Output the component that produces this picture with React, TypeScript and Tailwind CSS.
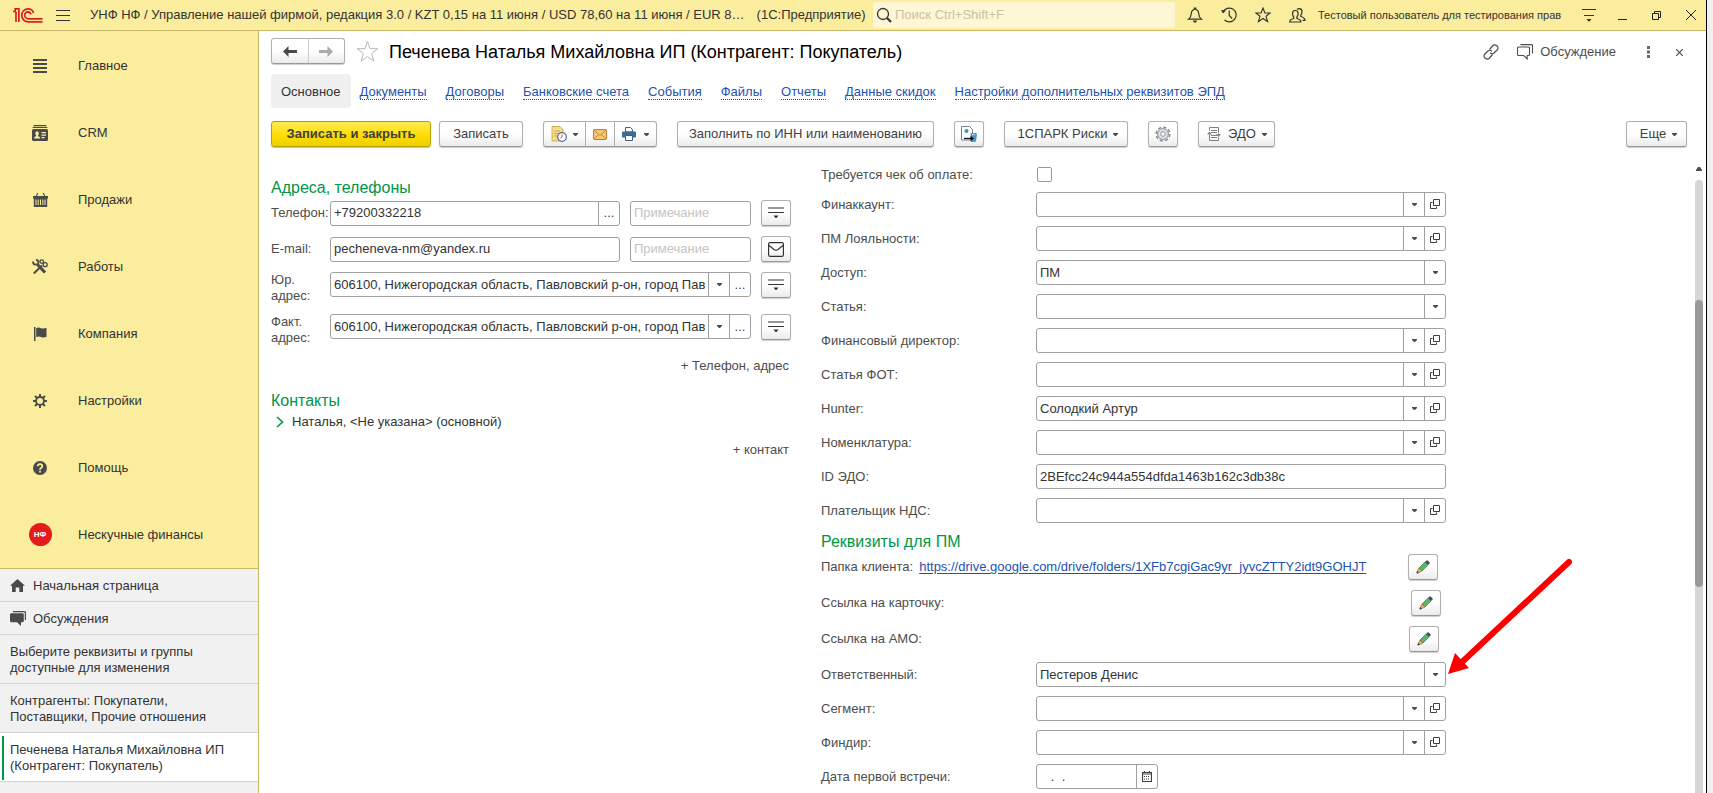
import { useState, type ReactNode } from "react";

const BTN =
  "h-[26px] shrink-0 flex items-center justify-center rounded-[3px] border border-[#b0b0b0] border-b-[#999] bg-linear-to-b from-white from-50% to-[#ebebeb] shadow-[0_1px_1px_rgba(0,0,0,0.2)] text-[#404040]";

const Caret = ({ className = "" }: { className?: string }) => (
  <svg className={className} width="5" height="3" viewBox="0 0 5 3" fill="#4d4d4d">
    <path d="M0 0h5v1L3 3H2L0 1z" />
  </svg>
);

const OpenIcon = () => (
  <svg width="10" height="11" viewBox="0 0 10 11" fill="none" stroke="#404040">
    <path d="M3.500.5h6v6h-6zM2.500 3.500h-2v6h6v-2" />
  </svg>
);

const MenuArrowIcon = () => (
  <svg width="16" height="12" viewBox="0 0 16 12" fill="none" stroke="#333" strokeWidth="1.200">
    <path d="M0 1h16M0 5.500h16" />
    <path d="M5.500 8.500h5L8.500 11h-1z" fill="#333" stroke="none" />
  </svg>
);

const LetterIcon = () => (
  <svg width="16" height="15" viewBox="0 0 16 15" fill="none" stroke="#333" strokeWidth="1.200">
    <rect x=".6" y=".6" width="14.800" height="13.800" rx="1.500" />
    <path d="M1 3.500l5 4q2 1.400 4 0l5-4" />
  </svg>
);

const PencilIcon = () => (
  <svg width="14" height="14" viewBox="0 0 14 14">
    <path d="M3 8L9 2l3 3-6 6z" fill="#58b866" stroke="#3d7d4a" strokeWidth=".7" />
    <path d="M9 2l1.500-1.500q.6-.5 1.200 0l1.800 1.800q.4.600 0 1.200L12 5z" fill="#44505c" />
    <path d="M3 8l3 3-4.700 2.300-.7-.7z" fill="#eab560" stroke="#7a5a30" strokeWidth=".6" />
    <path d="M1.400 11l1.600 1.600-2.500 1z" fill="#3a3a3a" />
  </svg>
);

const LogoIcon = () => (
  <svg width="30" height="15" viewBox="0 0 30 15" fill="none" stroke="#d8201d" strokeWidth="1.700">
    <path d="M0 3.500h3M2.200 3V.8h3.700V14M3 3.500V14" />
    <path d="M20.500 5A5.700 5.700 0 0 0 15 .9a6.200 6.200 0 0 0-6.200 6.300 6.400 6.400 0 0 0 6.400 6.700H29.500" />
    <path d="M17.800 6.500a3 3 0 0 0-2.800-2.700 3.300 3.300 0 0 0-3.300 3.400 3.600 3.600 0 0 0 3.600 3.600H29.500" />
  </svg>
);

const sections: { title: string; icon: ReactNode }[] = [
  {
    title: "Главное",
    icon: (
      <svg width="14" height="14" viewBox="0 0 14 14" fill="#4a4a4a">
        <path d="M0 0h14v2H0zM0 4h14v2H0zM0 8h14v2H0zM0 12h14v2H0z" />
      </svg>
    ),
  },
  {
    title: "CRM",
    icon: (
      <svg width="16" height="16" viewBox="0 0 16 16" fill="#4a4a4a">
        <path d="M2 0h12l1 1.200H1zM1 1.900h14l.6 1.200H.4z" />
        <rect y="3.900" width="16" height="12.100" rx="1.500" />
        <path d="M2 13.500q0-1.700 2-2.200l.2-.8Q3.400 9.500 3.400 8q0-1.700 1.700-1.700T6.800 8q0 1.500-.8 2.500l.2.800q2 .5 2 2.200zM9.500 7H14v1.200H9.500zM9.500 9.500H14v1.200H9.500zM9.500 12h3v1.200h-3z" fill="#fbed9e" />
      </svg>
    ),
  },
  {
    title: "Продажи",
    icon: (
      <svg width="15" height="14" viewBox="0 0 15 14" fill="#4a4a4a">
        <path d="M5 0L3 3.200M10 0l2 3.200" stroke="#4a4a4a" strokeWidth="1.100" />
        <path d="M0 3h15v2.500h-.8V14H.8V5.500H0z" />
        <path d="M2.500 6.500h1V12h-1zM4.700 6.500h1V12h-1zM7 6.500h1V12H7zM9.300 6.500h1V12h-1zM11.500 6.500h1V12h-1z" fill="#fbed9e" />
      </svg>
    ),
  },
  {
    title: "Работы",
    icon: (
      <svg width="16" height="15" viewBox="0 0 16 15" fill="none" stroke="#4a4a4a">
        <path d="M5.500 5.500L13 13.500" strokeWidth="3" />
        <path d="M1 2.500q0 3 2.700 3.200 2.500 0 2.800-2.200Q6.500 1 4 .8" strokeWidth="1.800" />
        <path d="M1.800 14.500L10 6.500" strokeWidth="2" />
        <circle cx="9.800" cy="2.600" r="1.800" strokeWidth="1.300" />
        <circle cx="13.200" cy="5.700" r="2" strokeWidth="1.300" />
      </svg>
    ),
  },
  {
    title: "Компания",
    icon: (
      <svg width="13" height="14" viewBox="0 0 13 14" fill="#4a4a4a">
        <path d="M0 0h1.500v14H0zM2.200 1.200Q4 0 6.500 1q3 1.200 6-.3v9q-3 1.300-5.500.2-2.500-1-4.800.2z" />
      </svg>
    ),
  },
  {
    title: "Настройки",
    icon: (
      <svg width="14" height="14" viewBox="0 0 14 14" fill="none" stroke="#4a4a4a">
        <circle cx="7" cy="7" r="4" strokeWidth="1.900" />
        <path d="M7 0v2.500M7 11.500V14M0 7h2.500M11.500 7H14M2 2l1.900 1.900M10.100 10.100L12 12M12 2l-1.900 1.900M3.900 10.100L2 12" strokeWidth="2" />
      </svg>
    ),
  },
  {
    title: "Помощь",
    icon: (
      <svg width="14" height="14" viewBox="0 0 14 14" fill="none">
        <circle cx="7" cy="7" r="7" fill="#4a4a4a" />
        <path d="M4.700 5.300Q4.800 3.200 7 3.200t2.300 1.900q0 1.200-1.200 1.800Q7 7.500 7 8.800" stroke="#fbed9e" strokeWidth="1.700" />
        <rect x="6.100" y="9.800" width="1.800" height="1.700" fill="#fbed9e" />
      </svg>
    ),
  },
  {
    title: "Нескучные финансы",
    icon: (
      <span className="size-[23px] shrink-0 rounded-full bg-[#e51b1b] flex items-center justify-center text-white font-bold text-[8px] leading-none">
        НФ
      </span>
    ),
  },
];

const tabs = [
  "Документы",
  "Договоры",
  "Банковские счета",
  "События",
  "Файлы",
  "Отчеты",
  "Данные скидок",
  "Настройки дополнительных реквизитов ЭПД",
];

type FieldKind = "ref" | "select" | "text";

const requisites: { label: string; kind: FieldKind; value: string }[] = [
  { label: "Финаккаунт:", kind: "ref", value: "" },
  { label: "ПМ Лояльности:", kind: "ref", value: "" },
  { label: "Доступ:", kind: "select", value: "ПМ" },
  { label: "Статья:", kind: "select", value: "" },
  { label: "Финансовый директор:", kind: "ref", value: "" },
  { label: "Статья ФОТ:", kind: "ref", value: "" },
  { label: "Hunter:", kind: "ref", value: "Солодкий Артур" },
  { label: "Номенклатура:", kind: "ref", value: "" },
  { label: "ID ЭДО:", kind: "text", value: "2BEfcc24c944a554dfda1463b162c3db38c" },
  { label: "Плательщик НДС:", kind: "ref", value: "" },
];

const managerFields: { label: string; kind: FieldKind; value: string }[] = [
  { label: "Ответственный:", kind: "select", value: "Пестеров Денис" },
  { label: "Сегмент:", kind: "ref", value: "" },
  { label: "Финдир:", kind: "ref", value: "" },
];

const BOX =
  "h-[25px] flex items-stretch rounded-[3px] border border-[#a0a0a0] bg-white overflow-hidden";
const INPUT =
  "min-w-0 flex-1 px-[3px] bg-transparent text-[#333] outline-none placeholder:text-[#c4c4c4]";
const BOX_BTN =
  "w-[21px] shrink-0 flex items-center justify-center border-l border-[#a0a0a0] text-[#404040]";

const Row = ({ label, kind, value }: { label: string; kind: FieldKind; value: string }) => {
  return (
    <div className="flex items-center">
      <label htmlFor={label} className="w-[215px] shrink-0">
        {label}
      </label>
      {kind === "select" ? (
        <div className="relative w-[410px]">
          <select
            id={label}
            defaultValue={value}
            className="block w-full h-[25px] appearance-none rounded-[3px] border border-[#a0a0a0] bg-white px-[3px] text-[#333] outline-none"
          >
            <option>{value}</option>
          </select>
          <span className="pointer-events-none absolute inset-y-0 right-0 w-[22px] flex items-center justify-center border-l border-[#a0a0a0]">
            <Caret />
          </span>
        </div>
      ) : (
        <div className={`${BOX} w-[410px]`}>
          <input id={label} defaultValue={value} className={INPUT} />
          {kind === "ref" && (
            <>
              <button className={BOX_BTN} aria-label="Выбрать">
                <Caret />
              </button>
              <button className={BOX_BTN} aria-label="Открыть">
                <OpenIcon />
              </button>
            </>
          )}
        </div>
      )}
    </div>
  );
};

const Header = () => (
  <header className="h-[31px] shrink-0 flex items-center bg-[#fbed9e] border-b border-[#c9b868] pl-[13px] pr-[10px] text-[#333]">
    <LogoIcon />
    <button className="ml-[13px]" aria-label="Меню">
      <svg width="14" height="11" viewBox="0 0 14 11" stroke="#333">
        <path d="M0 .5h14M0 5.500h14M0 10.500h14" />
      </svg>
    </button>
    <div className="ml-5 flex-1 min-w-0 flex gap-3 whitespace-nowrap">
      <span>УНФ НФ / Управление нашей фирмой, редакция 3.0 / KZT 0,15 на 11 июня / USD 78,60 на 11 июня / EUR 8…</span>
      <span>(1С:Предприятие)</span>
    </div>
    <label className="w-[302px] h-[26px] shrink-0 flex items-center gap-0.5 rounded-[3px] bg-[#fef6d4] pl-[3px]">
      <svg width="17" height="17" viewBox="0 0 17 17" fill="none" stroke="#333">
        <circle cx="7" cy="7" r="5.500" strokeWidth="1.300" />
        <path d="M11 11l4 4" strokeWidth="2.200" />
      </svg>
      <input placeholder="Поиск Ctrl+Shift+F" className="flex-1 min-w-0 outline-none placeholder:text-[#c9c3a6]" />
    </label>
    <div className="shrink-0 flex items-center gap-[18px] pl-3">
      <button aria-label="Уведомления">
        <svg width="16" height="16" viewBox="0 0 16 16" fill="none" stroke="#333" strokeWidth="1.200">
          <path d="M1.500 12.200h13Q12 10.500 11.800 7 11.500 3 8.700 2.300V1H7.300v1.300Q4.500 3 4.200 7 4 10.500 1.500 12.200z" />
          <path d="M5.800 13.500h4.400L9 15.500H7z" fill="#333" stroke="none" />
        </svg>
      </button>
      <button aria-label="История">
        <svg width="16" height="16" viewBox="0 0 16 16" fill="none" stroke="#333" strokeWidth="1.200">
          <path d="M2 5A6.900 6.900 0 1 1 3.500 13M8.200 3.500V8.500l3 3" />
          <path d="M0 3l5 .5-3 3z" fill="#333" stroke="none" />
        </svg>
      </button>
      <button aria-label="Избранное">
        <svg width="16" height="16" viewBox="0 0 16 16" fill="none" stroke="#333" strokeWidth="1.100">
          <path d="M8 1l1.900 5h5.300l-4.200 3.200 1.600 5.400L8 11.500l-4.600 3.100L5 9.200.8 6h5.300z" />
        </svg>
      </button>
      <button aria-label="Пользователь">
        <svg width="17" height="15" viewBox="0 0 17 15" fill="none" stroke="#333" strokeWidth="1.200">
          <path d="M.7 14q0-2.500 4-3.500V9Q3.500 7.800 3.500 5.500q0-3 2.800-3t2.800 3q0 2.300-1.200 3.500v1.500q4 1 4 3.500z" />
          <path d="M8 1.500Q9 .6 10.300.6 13 .6 13 3.700q0 2.300-1.200 3.400v1.400q4 1 4.200 3.800h-2.500" />
        </svg>
      </button>
    </div>
    <span className="shrink-0 ml-3 w-[250px] whitespace-nowrap text-[11px]">Тестовый пользователь для тестирования прав</span>
    <button className="shrink-0 ml-[13px]" aria-label="Сервис">
      <svg width="16" height="13" viewBox="0 0 16 13" fill="none" stroke="#333">
        <path d="M1 .5h14M3 6.500h10" strokeWidth="1.200" />
        <path d="M5.500 10h5l-2 2.500h-1z" fill="#333" stroke="none" />
      </svg>
    </button>
    <div className="shrink-0 flex items-center gap-[25px] ml-[21px]">
      <button aria-label="Свернуть">
        <svg width="9" height="10" viewBox="0 0 9 10" stroke="#222">
          <path d="M0 9.500h9" />
        </svg>
      </button>
      <button aria-label="Развернуть">
        <svg width="9" height="9" viewBox="0 0 9 9" fill="none" stroke="#222">
          <path d="M.5 2.500h6v6h-6zM2.500 2.500v-2h6v6h-2" />
        </svg>
      </button>
      <button aria-label="Закрыть">
        <svg width="10" height="10" viewBox="0 0 10 10" stroke="#222">
          <path d="M0 0l10 10M10 0L0 10" />
        </svg>
      </button>
    </div>
  </header>
);

const Sidebar = () => (
  <aside className="w-[259px] shrink-0 flex flex-col border-r border-[#c9b868] bg-[#f1f1f1] text-[#333]">
    <nav className="shrink-0 bg-[#fbed9e] pt-px border-b border-[#c9b868]">
      {sections.map((s) => (
        <a key={s.title} href="#" className="h-[67px] flex items-center">
          <span className="w-[78px] pl-0.5 box-border shrink-0 flex justify-center">{s.icon}</span>
          <span>{s.title}</span>
        </a>
      ))}
    </nav>
    <div className="leading-4">
      <a href="#" className="h-[33px] pt-px flex items-center gap-2 px-[10px] border-b border-[#d4d4d4]">
        <svg width="15" height="13" viewBox="0 0 15 13" fill="#4a4a4a">
          <path d="M7.500 0L15 6.800h-2V13H9.300V8.500H5.700V13H2V6.800H0z" />
        </svg>
        Начальная страница
      </a>
      <a href="#" className="h-[33px] pt-px flex items-center gap-[7px] px-[10px] border-b border-[#d4d4d4]">
        <svg width="16" height="15" viewBox="0 0 16 15" fill="#4a4a4a">
          <path d="M3 0h11.500Q16 0 16 1.500V9h-1.200V2q0-.8-.8-.8H3z" />
          <path d="M1.500 2.200h11q1.300 0 1.300 1.300V10q0 1.300-1.300 1.300H11V15l-4-3.700H1.500Q0 11.300 0 10V3.500q0-1.300 1.500-1.300z" />
        </svg>
        Обсуждения
      </a>
      <a href="#" className="h-[49px] pt-px flex items-center px-[10px] border-b border-[#d4d4d4]">
        Выберите реквизиты и группы
        <br />
        доступные для изменения
      </a>
      <a href="#" className="h-[49px] pt-px flex items-center px-[10px] border-b border-[#d4d4d4]">
        Контрагенты: Покупатели,
        <br />
        Поставщики, Прочие отношения
      </a>
      <a href="#" className="h-[49px] pt-px flex items-center pl-0.5 bg-white border-b border-[#d4d4d4]">
        <span className="h-11 w-0.5 mr-[6px] bg-[#009646]" />
        Печенева Наталья Михайловна ИП
        <br />
        (Контрагент: Покупатель)
      </a>
    </div>
  </aside>
);

const Toolbar = () => (
  <div className="mt-[13px] flex items-center">
    <button className="h-[26px] w-40 rounded-[3px] border border-[#b5a100] bg-linear-to-b from-[#ffe94a] via-[#ffe000] to-[#efcf00] shadow-[0_1px_1px_rgba(0,0,0,0.25)] font-bold text-[#404040]">
      Записать и закрыть
    </button>
    <button className={`${BTN} w-[84px] ml-2`}>Записать</button>
    <div className={`${BTN} ml-5 items-stretch`}>
      <button className="w-[41px] flex items-center justify-center gap-[6px]" aria-label="Создать на основании">
        <svg width="16" height="16" viewBox="0 0 16 16">
          <path d="M1 .5h8l3 3V15H1z" fill="#f5dc8c" stroke="#c9a23c" strokeWidth=".8" />
          <path d="M3 5h6M3 7.500h5M3 10h3" stroke="#cfa94a" />
          <circle cx="11" cy="11" r="4.300" fill="#fff" stroke="#3f6fa0" strokeWidth="1.200" />
          <path d="M11 8.500V11l-1.500 1.200" fill="none" stroke="#c33" strokeWidth=".9" />
        </svg>
        <Caret />
      </button>
      <button className="w-[30px] flex items-center justify-center border-x border-[#b0b0b0]" aria-label="Отправить письмо">
        <svg width="14" height="11" viewBox="0 0 14 11" fill="none">
          <rect x=".5" y=".5" width="13" height="10" rx="1" fill="#f7c977" stroke="#c07a2a" />
          <path d="M1 1l6 5.500L13 1M1 10l4.500-4.500M13 10L8.500 5.500" stroke="#c07a2a" strokeWidth=".9" />
        </svg>
      </button>
      <button className="w-[41px] flex items-center justify-center gap-2" aria-label="Печать">
        <svg width="14" height="14" viewBox="0 0 14 14">
          <path d="M3.500 5V.5h5L10.500 2.500V5z" fill="#fff" stroke="#3d5f80" />
          <rect y="4.500" width="14" height="6" rx="1" fill="#3d6c94" />
          <path d="M3.500 8.500h7v5h-7z" fill="#fff" stroke="#3d5f80" />
        </svg>
        <Caret />
      </button>
    </div>
    <button className={`${BTN} w-[257px] ml-5`}>Заполнить по ИНН или наименованию</button>
    <button className={`${BTN} w-[30px] ml-5`} aria-label="Досье">
      <svg width="16" height="16" viewBox="0 0 16 16">
        <path d="M.5.500h8l3 3V14H.5z" fill="#fff" stroke="#6f7f8c" />
        <circle cx="5.500" cy="5" r="2" fill="#2f8fc4" />
        <path d="M5 3.800l1.500 1-.7 1.700z" fill="#4fae4f" />
        <path d="M9.500 7h5q1.500 0 1.500 1.500L15 15q0 1-1.500 1H10z" fill="#4f96c8" />
        <path d="M11 8.800q2-1 3 .5" stroke="#cfe5f5" fill="none" />
        <path d="M3 12.500h7" stroke="#111" strokeWidth="1.300" />
        <path d="M9.500 9.800l3.500 2.700-3.500 2.700z" fill="#111" />
      </svg>
    </button>
    <button className={`${BTN} w-[124px] ml-5 gap-[6px] pl-1`}>
      1СПАРК Риски
      <Caret />
    </button>
    <button className={`${BTN} w-[30px] ml-5`} aria-label="Настройка">
      <svg width="16" height="16" viewBox="0 0 16 16" fill="none" stroke="#8a9199">
        <circle cx="8" cy="8" r="6.800" strokeWidth="1.600" strokeDasharray="3.300 2.040" />
        <circle cx="8" cy="8" r="5.400" fill="#dfe2e5" />
        <circle cx="8" cy="8" r="2.300" fill="#fff" />
      </svg>
    </button>
    <button className={`${BTN} w-[77px] ml-5 gap-[6px]`}>
      <svg width="16" height="14" viewBox="0 0 16 14" fill="none" stroke="#808080">
        <path d="M3.500 3.500v-3h9v6M3.500 7.500v6h9v-3M5 3.500h6M5 5.500h6M5 8.500h6M5 10.500h6" />
        <path d="M3.500 4.500L1 7.500h5zM12.500 10L10 7h5z" fill="#808080" stroke="none" />
      </svg>
      ЭДО
      <Caret />
    </button>
    <button className={`${BTN} w-[61px] ml-auto gap-[6px] pl-1`}>
      Еще
      <Caret />
    </button>
  </div>
);

const Contacts = () => (
  <section className="w-[520px] shrink-0 pt-7">
    <h2 className="h-[25px] leading-[25px] text-base text-[#009646]">Адреса, телефоны</h2>
    <div className="flex flex-col gap-[10px]">
      <div className="flex items-center">
        <label htmlFor="phone" className="w-[59px] shrink-0">Телефон:</label>
        <div className={`${BOX} w-[290px]`}>
          <input id="phone" defaultValue="+79200332218" className={INPUT} />
          <button className={BOX_BTN}>...</button>
        </div>
        <div className={`${BOX} ml-[10px] w-[121px]`}>
          <input aria-label="Примечание" placeholder="Примечание" className={INPUT} />
        </div>
        <button className={`${BTN} w-[30px] ml-[10px]`} aria-label="Действия">
          <MenuArrowIcon />
        </button>
      </div>
      <div className="flex items-center">
        <label htmlFor="email" className="w-[59px] shrink-0">E-mail:</label>
        <div className={`${BOX} w-[290px]`}>
          <input id="email" defaultValue="pecheneva-nm@yandex.ru" className={INPUT} />
        </div>
        <div className={`${BOX} ml-[10px] w-[121px]`}>
          <input aria-label="Примечание" placeholder="Примечание" className={INPUT} />
        </div>
        <button className={`${BTN} w-[30px] ml-[10px]`} aria-label="Написать">
          <LetterIcon />
        </button>
      </div>
      {["Юр.", "Факт."].map((kind) => (
        <div key={kind} className="flex items-start">
          <label htmlFor={kind} className="w-[59px] shrink-0 leading-4">
            {kind}
            <br />
            адрес:
          </label>
          <div className={`${BOX} w-[421px]`}>
            <input
              id={kind}
              defaultValue="606100, Нижегородская область, Павловский р-он, город Павлово"
              className={INPUT}
            />
            <button className={BOX_BTN} aria-label="Выбрать">
              <Caret />
            </button>
            <button className={BOX_BTN}>...</button>
          </div>
          <button className={`${BTN} w-[30px] ml-[10px]`} aria-label="Действия">
            <MenuArrowIcon />
          </button>
        </div>
      ))}
    </div>
    <div className="mt-[10px] flex justify-end pr-0.5">
      <button>+ Телефон, адрес</button>
    </div>
    <h2 className="mt-3 h-[26px] leading-[26px] text-base text-[#009646]">Контакты</h2>
    <button className="flex items-center gap-2 pl-[5px] leading-4 text-[#333]">
      <svg width="8" height="12" viewBox="0 0 8 12" fill="none" stroke="#009646" strokeWidth="1.600">
        <path d="M1 1l5.500 5L1 11" />
      </svg>
      Наталья, &lt;Не указана&gt; (основной)
    </button>
    <div className="mt-[10px] flex justify-end pr-0.5">
      <button>+ контакт</button>
    </div>
  </section>
);

const Requisites = () => {
  const [receipt, setReceipt] = useState(false);
  return (
    <section className="w-[640px] shrink-0 pt-5">
      <div className="h-[15px] flex items-center">
        <label htmlFor="receipt" className="w-[216px]">Требуется чек об оплате:</label>
        <input
          id="receipt"
          type="checkbox"
          checked={receipt}
          onChange={(e) => setReceipt(e.target.checked)}
          className="size-[15px] appearance-none rounded-[2px] border border-[#999] bg-white checked:bg-[#009646]"
        />
      </div>
      <div className="mt-[10px] flex flex-col gap-[9px]">
        {requisites.map((f) => (
          <Row key={f.label} {...f} />
        ))}
      </div>
      <h2 className="mt-[6px] h-[25px] leading-[25px] text-base text-[#009646]">Реквизиты для ПМ</h2>
      <div className="flex flex-col gap-[10px]">
        <div className="flex items-center w-[617px]">
          <span>Папка клиента:</span>
          <a href="#" className="ml-[6px] text-[#1d52b0] underline underline-offset-2">
            https://drive.google.com/drive/folders/1XFb7cgiGac9yr_jyvcZTTY2idt9GOHJT
          </a>
          <button className={`${BTN} w-[30px] ml-auto`} aria-label="Изменить папку">
            <PencilIcon />
          </button>
        </div>
        <div className="flex items-center justify-between w-[620px]">
          <span>Ссылка на карточку:</span>
          <button className={`${BTN} w-[30px]`} aria-label="Изменить ссылку">
            <PencilIcon />
          </button>
        </div>
        <div className="flex items-center justify-between w-[618px]">
          <span>Ссылка на АМО:</span>
          <button className={`${BTN} w-[30px]`} aria-label="Изменить ссылку на АМО">
            <PencilIcon />
          </button>
        </div>
      </div>
      <div className="mt-[10px] flex flex-col gap-[9px]">
        {managerFields.map((f) => (
          <div key={f.label} className="relative">
            <Row {...f} />
            {f.kind === "select" && (
              <svg className="absolute left-[626px] -top-[104px] pointer-events-none" width="128" height="120" viewBox="0 0 128 120">
                <path d="M122 4L14 105" stroke="#f00" strokeWidth="6" strokeLinecap="round" />
                <path d="M1 116L8 95l14 15z" fill="#f00" />
              </svg>
            )}
          </div>
        ))}
        <div className="flex items-center">
          <label htmlFor="meeting" className="w-[215px] shrink-0">Дата первой встречи:</label>
          <div className={`${BOX} w-[122px]`}>
            <input id="meeting" defaultValue="   .  ." className={`${INPUT} whitespace-pre`} />
            <button className={BOX_BTN} aria-label="Календарь">
              <svg width="10" height="11" viewBox="0 0 10 11" fill="none" stroke="#404040">
                <path d="M.5 1.500h9v9h-9zM0 3h10" strokeWidth="1.200" />
                <path d="M2.500 0v2M7.500 0v2" />
                <path d="M2 5.500h6M2 8h6" strokeDasharray="1 1" />
              </svg>
            </button>
          </div>
        </div>
      </div>
    </section>
  );
};

export default function App() {
  return (
    <div className="h-screen overflow-hidden flex bg-[#f0f0f0] pr-[6px] font-['Liberation_Sans',Arial,sans-serif] text-[13px] leading-5 text-[#4d4d4d]">
      <div className="flex-1 min-w-0 flex flex-col bg-white border-r border-black">
        <Header />
        <div className="flex-1 min-h-0 flex">
          <Sidebar />
          <main className="flex-1 min-w-0 flex flex-col pl-3">
            <div className="pr-[19px] pt-2">
              <div className="flex items-center h-6">
                <div className={`${BTN} w-[74px] items-stretch`}>
                  <button className="flex-1 flex items-center justify-center border-r border-[#ccc]" aria-label="Назад">
                    <svg width="14" height="11" viewBox="0 0 14 11" fill="#4a4a4a">
                      <path d="M0 5.500L5.500 0v4H14v3H5.500v4z" />
                    </svg>
                  </button>
                  <button className="flex-1 flex items-center justify-center" aria-label="Вперед">
                    <svg width="14" height="11" viewBox="0 0 14 11" fill="#aaa">
                      <path d="M14 5.500L8.500 0v4H0v3h8.500v4z" />
                    </svg>
                  </button>
                </div>
                <button className="ml-[11px]" aria-label="В избранное">
                  <svg width="23" height="23" viewBox="0 0 23 23" fill="none" stroke="#b4bac0">
                    <path d="M11.500 1.500l2.500 7.200h7.800l-6.200 4.800 2.300 7.700-6.400-4.700-6.400 4.700 2.300-7.700L1.200 8.700H9z" />
                  </svg>
                </button>
                <h1 className="ml-[10px] pt-0.5 text-lg text-black">Печенева Наталья Михайловна ИП (Контрагент: Покупатель)</h1>
                <div className="ml-auto pt-0.5 flex items-center">
                  <button aria-label="Ссылка">
                    <svg width="16" height="16" viewBox="0 0 16 16" fill="none" stroke="#4d4d4d" strokeWidth="1.200">
                      <path d="M6.500 5.500l3-3.500q2-2 4.300-.3 2.300 2 .3 4.300L11 9q-2 1.600-4-.2" />
                      <path d="M9.500 10.500l-3 3.500q-2 2-4.300.3-2.300-2-.3-4.300L5 7q2-1.600 4 .2" />
                    </svg>
                  </button>
                  <button className="ml-[18px] flex items-center gap-[7px]">
                    <svg width="16" height="16" viewBox="0 0 16 16" fill="none" stroke="#4d4d4d" strokeWidth="1.100">
                      <path d="M1.500 3h10q1 0 1 1v6.500q0 1-1 1h-1.300v3.500l-3.500-3.500H1.500q-1 0-1-1V4q0-1 1-1z" />
                      <path d="M3.500.6h11q1 0 1 1V9.500" />
                    </svg>
                    Обсуждение
                  </button>
                  <button className="ml-[31px]" aria-label="Еще действия">
                    <svg width="3" height="12" viewBox="0 0 3 12" fill="#666">
                      <path d="M0 0h3v3H0zM0 4.500h3v3H0zM0 9h3v3H0z" />
                    </svg>
                  </button>
                  <button className="ml-[26px] mr-1" aria-label="Закрыть форму">
                    <svg width="7" height="7" viewBox="0 0 7 7" stroke="#4d4d4d" strokeWidth="1.200">
                      <path d="M0 0l7 7M7 0L0 7" />
                    </svg>
                  </button>
                </div>
              </div>
              <nav className="mt-[11px] flex items-center gap-[19px]">
                <a href="#" className="h-[34px] -mr-[10px] px-[10px] pt-0.5 flex items-center rounded bg-[#f0f0f0] text-[#333]">
                  Основное
                </a>
                {tabs.map((t) => (
                  <a key={t} href="#" className="mt-0.5 leading-[15px] border-b border-dotted border-[#1d52b0] text-[#1d52b0] whitespace-nowrap">
                    {t}
                  </a>
                ))}
              </nav>
              <Toolbar />
            </div>
            <div className="flex-1 min-h-0 flex">
              <div className="flex-1 min-w-0 overflow-hidden flex gap-[30px] items-start">
                <Contacts />
                <Requisites />
              </div>
              <div className="w-2 mr-[3px] shrink-0 flex flex-col items-center pt-5">
                <svg width="6" height="4" viewBox="0 0 6 4" fill="#4d4d4d">
                  <path d="M0 4V3l2-3h2l2 3v1z" />
                </svg>
                <div className="mt-[9px] w-full flex-1 rounded-t bg-[#d6d6d6] pt-[120px]">
                  <div className="h-[287px] rounded bg-[#999]" />
                </div>
              </div>
            </div>
          </main>
        </div>
      </div>
    </div>
  );
}
